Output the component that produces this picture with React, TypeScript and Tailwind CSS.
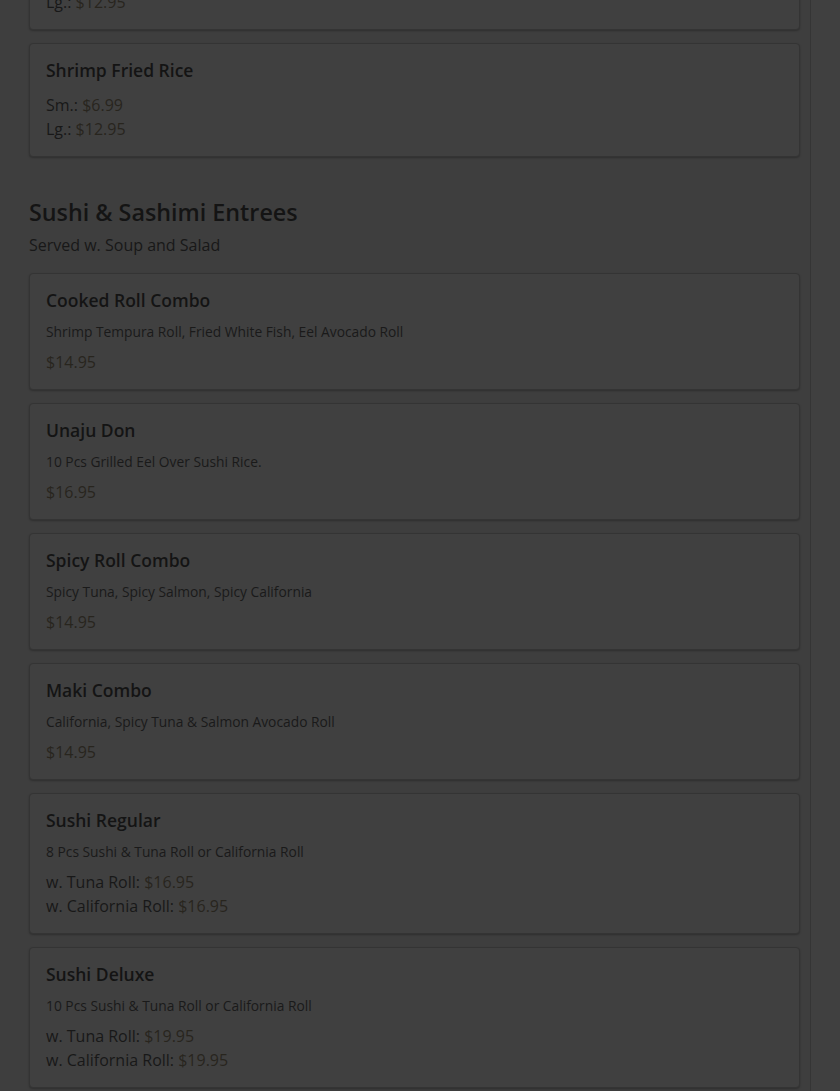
type Price = { label?: string; value: string }
type Item = { name: string; desc?: string; prices: Price[] }

const font = { fontFamily: '"Open Sans", "Noto Sans", sans-serif' }

const entrees: Item[] = [
  { name: 'Cooked Roll Combo', desc: 'Shrimp Tempura Roll, Fried White Fish, Eel Avocado Roll', prices: [{ value: '$14.95' }] },
  { name: 'Unaju Don', desc: '10 Pcs Grilled Eel Over Sushi Rice.', prices: [{ value: '$16.95' }] },
  { name: 'Spicy Roll Combo', desc: 'Spicy Tuna, Spicy Salmon, Spicy California', prices: [{ value: '$14.95' }] },
  { name: 'Maki Combo', desc: 'California, Spicy Tuna & Salmon Avocado Roll', prices: [{ value: '$14.95' }] },
  {
    name: 'Sushi Regular',
    desc: '8 Pcs Sushi & Tuna Roll or California Roll',
    prices: [
      { label: 'w. Tuna Roll:', value: '$16.95' },
      { label: 'w. California Roll:', value: '$16.95' },
    ],
  },
  {
    name: 'Sushi Deluxe',
    desc: '10 Pcs Sushi & Tuna Roll or California Roll',
    prices: [
      { label: 'w. Tuna Roll:', value: '$19.95' },
      { label: 'w. California Roll:', value: '$19.95' },
    ],
  },
]

function MenuCard({ item }: { item: Item }) {
  return (
    <div className="rounded-[4px] border border-[#343434] bg-[#404040] px-4 pt-[15px] pb-[15px] shadow-[0_1px_2px_rgba(0,0,0,0.25)]">
      <h3 className="text-[17.5px] leading-[22px] font-semibold text-[#141414]">{item.name}</h3>
      {item.desc && <p className="mt-[11px] text-[13.8px] leading-[20px] text-[#1a1a1a]">{item.desc}</p>}
      <div className={item.desc ? 'mt-2' : 'mt-3'}>
        {item.prices.map((p, i) => (
          <div key={i} className="text-[16px] leading-[24px] text-[#181818]">
            {p.label && <span>{p.label} </span>}
            <span className="text-[#28251e]">{p.value}</span>
          </div>
        ))}
      </div>
    </div>
  )
}

export default function App() {
  return (
    <div className="flex h-[1091px] w-full overflow-hidden bg-[#3e3e3e]" style={font}>
      {/* page content, scrolled */}
      <div className="w-[811px] shrink-0 border-r border-[#353535] pl-[29px] pr-[10px]">
        <div className="-mt-[84px] flex flex-col gap-[13px]">
          <MenuCard item={{ name: 'Chicken Fried Rice', prices: [{ label: 'Sm.:', value: '$6.99' }, { label: 'Lg.:', value: '$12.95' }] }} />
          <MenuCard item={{ name: 'Shrimp Fried Rice', prices: [{ label: 'Sm.:', value: '$6.99' }, { label: 'Lg.:', value: '$12.95' }] }} />
        </div>

        <div className="mt-[39px]">
          <h2 className="text-[23.3px] leading-[32px] font-semibold text-[#141414]">Sushi &amp; Sashimi Entrees</h2>
          <p className="mt-[5px] text-[16px] leading-[24px] text-[#181818]">Served w. Soup and Salad</p>
        </div>

        <div className="mt-4 flex flex-col gap-[13px]">
          {entrees.map((item) => (
            <MenuCard key={item.name} item={item} />
          ))}
        </div>
      </div>
      {/* scrollbar strip */}
      <div className="flex-1 bg-[#404040]" />
    </div>
  )
}
